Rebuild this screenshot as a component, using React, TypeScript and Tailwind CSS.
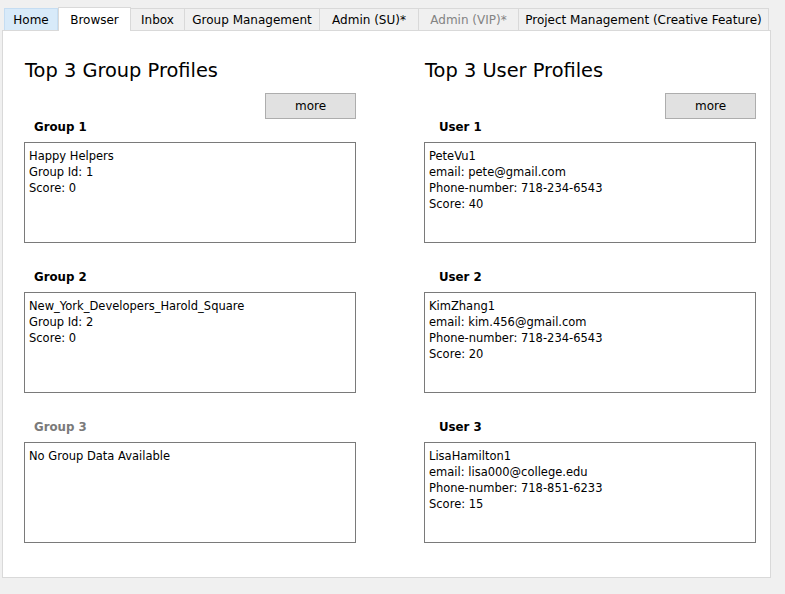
import React from "react";

const font = { fontFamily: '"DejaVu Sans", Tahoma, sans-serif' };

type Card = { label: string; muted?: boolean; lines: string[] };

const groups: Card[] = [
  { label: "Group 1", lines: ["Happy Helpers", "Group Id: 1", "Score: 0"] },
  { label: "Group 2", lines: ["New_York_Developers_Harold_Square", "Group Id: 2", "Score: 0"] },
  { label: "Group 3", muted: true, lines: ["No Group Data Available"] },
];

const users: Card[] = [
  { label: "User 1", lines: ["PeteVu1", "email: pete@gmail.com", "Phone-number: 718-234-6543", "Score: 40"] },
  { label: "User 2", lines: ["KimZhang1", "email: kim.456@gmail.com", "Phone-number: 718-234-6543", "Score: 20"] },
  { label: "User 3", lines: ["LisaHamilton1", "email: lisa000@college.edu", "Phone-number: 718-851-6233", "Score: 15"] },
];

const tabs = [
  { name: "Home", w: "w-[54px]", cls: "bg-[#d8eaf9] border-[#c5ddf2]" },
  { name: "Browser", w: "w-[73px]", selected: true },
  { name: "Inbox", w: "w-[54px]" },
  { name: "Group Management", w: "w-[135px]" },
  { name: "Admin (SU)*", w: "w-[99px]" },
  { name: "Admin (VIP)*", w: "w-[100px]", disabled: true },
  { name: "Project Management (Creative Feature)", w: "w-[250px]" },
];

function Column({ title, cards, indent }: { title: string; cards: Card[]; indent: string }) {
  return (
    <div className="w-[332px] flex flex-col">
      <h2 className="text-[19.4px] leading-[24px] text-black pl-[1px] mt-[1px] -mb-[1px]">{title}</h2>
      <div className="flex justify-end mt-[11px]">
        <button className="w-[91px] h-[26px] bg-[#e1e1e1] border border-[#adadad] text-[12px] text-black">more</button>
      </div>
      {cards.map((c, i) => (
        <div key={c.label} className={i === 0 ? "" : "mt-[26px]"}>
          <div className={`h-[23px] ${indent} text-[11.8px] font-bold leading-[16px] ${c.muted ? "text-[#7a7a7a]" : "text-black"}`}>
            {c.label}
          </div>
          <div className="h-[101px] border border-[#7a7a7a] px-[4px] pt-[5px] text-[11.5px] leading-[16px] text-black">
            {c.lines.map((l) => (
              <div key={l}>{l}</div>
            ))}
          </div>
        </div>
      ))}
    </div>
  );
}

export default function App() {
  return (
    <div className="w-[785px] h-[594px] bg-[#f0f0f0] pt-[7px] pl-[2px]" style={font}>
      {/* tab strip */}
      <div className="flex items-end h-[23px] pl-[2px]">
        {tabs.map((t) =>
          t.selected ? (
            <div
              key={t.name}
              className={`${t.w} h-[24px] -mb-[1px] bg-white border border-b-0 border-[#d9d9d9] text-[12px] flex items-center justify-center relative z-10`}
            >
              {t.name}
            </div>
          ) : (
            <div
              key={t.name}
              className={`${t.w} h-[22px] border border-l-0 first:border-l border-b-0 text-[12px] flex items-center justify-center ${
                t.cls ?? "bg-[#f0f0f0] border-[#d9d9d9]"
              } ${t.disabled ? "text-[#838383]" : "text-black"}`}
            >
              {t.name}
            </div>
          )
        )}
      </div>
      {/* panel */}
      <div className="w-[769px] h-[548px] bg-white border border-[#d9d9d9] flex gap-[68px] pl-[21px] pt-[27px]">
        <Column title="Top 3 Group Profiles" cards={groups} indent="pl-[10px]" />
        <Column title="Top 3 User Profiles" cards={users} indent="pl-[15px]" />
      </div>
    </div>
  );
}
